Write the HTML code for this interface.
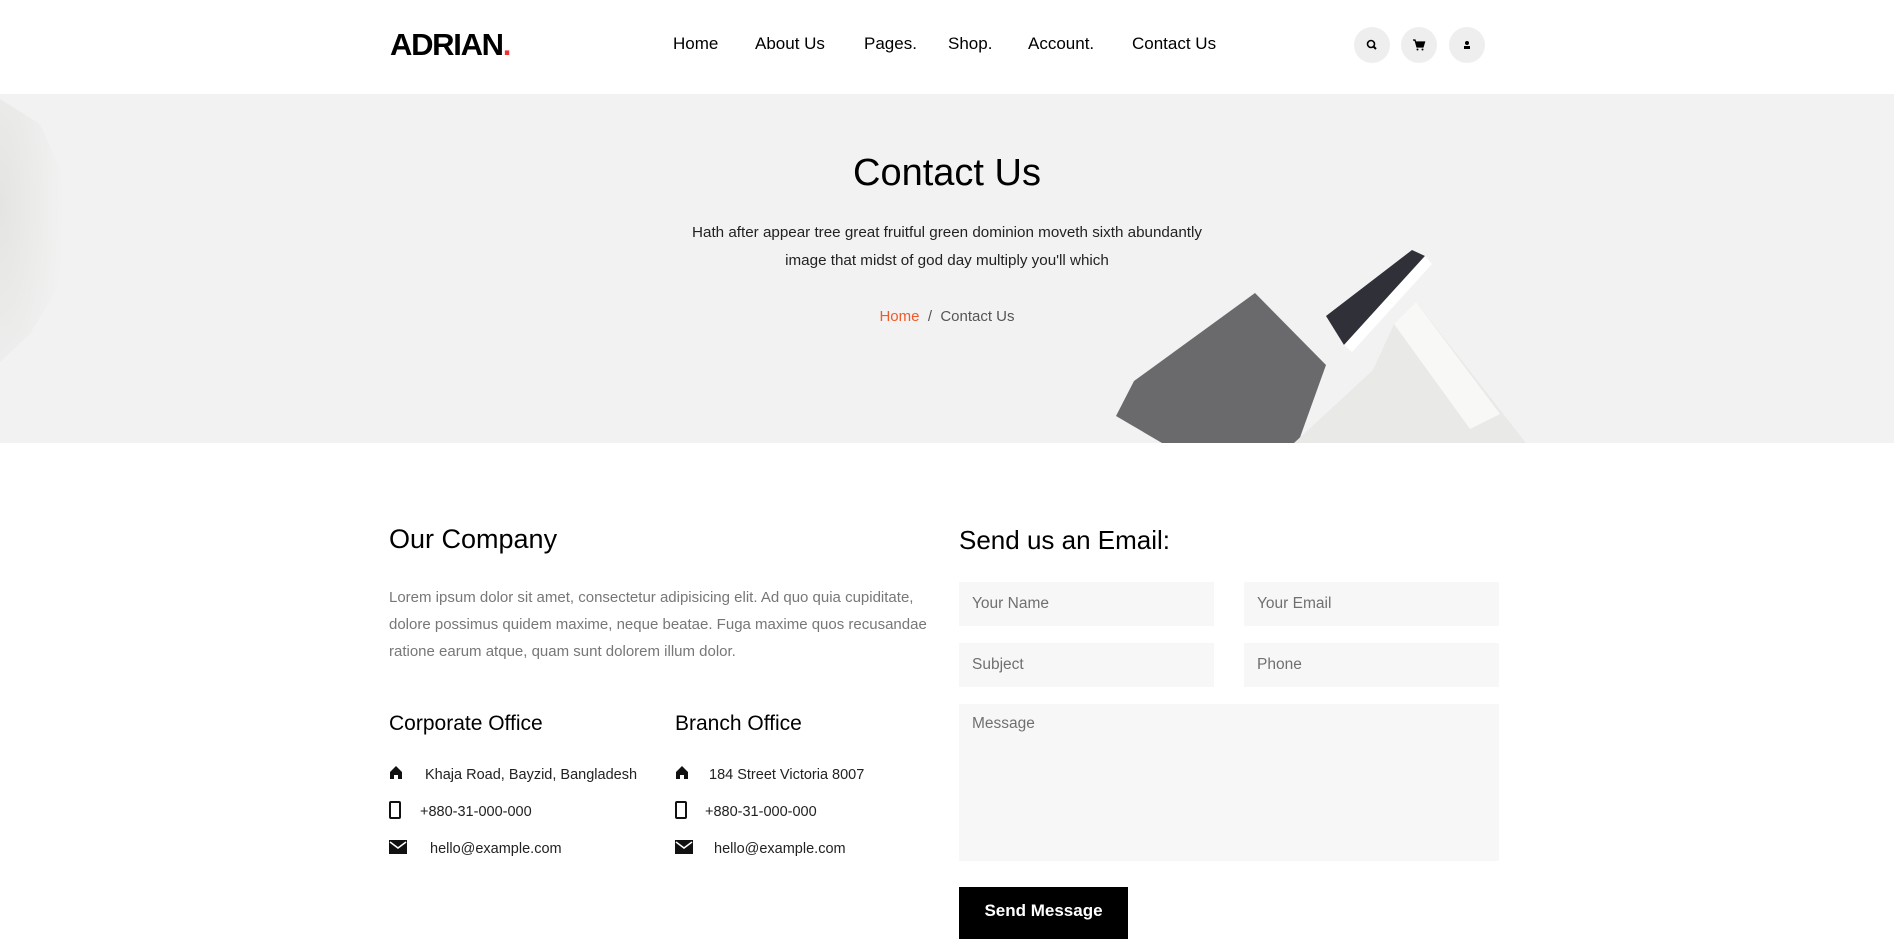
<!DOCTYPE html>
<html><head><meta charset="utf-8"><style>
*{margin:0;padding:0;box-sizing:border-box}
body{width:1894px;height:926px;overflow:hidden;background:#fff;font-family:"Liberation Sans",sans-serif;color:#000;position:relative}
.a{position:absolute;white-space:nowrap}
.nav{font-size:17px;top:34px}
.ic{position:absolute;top:27px;width:36px;height:36px;border-radius:50%;background:#eee}
.hero{position:absolute;top:94px;left:0;width:1894px;height:349px;background:#f2f2f2;overflow:hidden}
.inp{position:absolute;background:#f7f7f7;height:44px;color:#707070;font-size:15.5px;padding:13px 13px}
.ci{font-size:14.5px;color:#222}
</style></head><body>
<div class="a" style="left:390px;top:27px;font-size:31px;font-weight:bold;letter-spacing:-1.3px">ADRIAN<span style="color:#e33">.</span></div>
<div class="a nav" style="left:673px">Home</div>
<div class="a nav" style="left:755px">About Us</div>
<div class="a nav" style="left:864px">Pages.</div>
<div class="a nav" style="left:948px">Shop.</div>
<div class="a nav" style="left:1028px">Account.</div>
<div class="a nav" style="left:1132px">Contact Us</div>
<div class="ic" style="left:1354px"><svg width="36" height="36"><circle cx="17" cy="17" r="3.5" fill="none" stroke="#000" stroke-width="1.6"/><line x1="19.5" y1="19.5" x2="22" y2="22" stroke="#000" stroke-width="2"/></svg></div>
<div class="ic" style="left:1401px"><svg width="36" height="36"><path d="M12 13h2l2 7h6l1.5-5H15" fill="#000" stroke="#000" stroke-width="1.3"/><circle cx="16.5" cy="22.5" r="1" fill="#000"/><circle cx="21.5" cy="22.5" r="1" fill="#000"/></svg></div>
<div class="ic" style="left:1449px"><svg width="36" height="36"><circle cx="18" cy="16" r="2" fill="#000"/><rect x="15" y="19" width="6" height="3" fill="#000"/></svg></div>
<div class="hero">
<svg width="1894" height="349" style="position:absolute;left:0;top:0">
<defs><radialGradient id="g" cx="0" cy="0.4" r="0.9"><stop offset="0" stop-color="#e4e4e2"/><stop offset="1" stop-color="#f2f2f2"/></radialGradient></defs>
<path d="M0 5 L40 30 L72 100 L60 190 L30 240 L0 268 Z" fill="url(#g)"/>
<path d="M1255 199 L1326 271 L1298 349 L1162 349 L1116 322 L1134 287 Z" fill="#6a6a6c"/>
<path d="M1326 222 L1412 156 L1425 162 L1344 251 Z" fill="#2f3038"/>
<path d="M1344 251 L1425 162 L1432 170 L1352 258 Z" fill="#fff"/>
<path d="M1394 230 L1416 208 L1526 349 L1294 349 L1373 276 Z" fill="#e9e9e7"/>
<path d="M1394 230 L1416 208 L1500 320 L1470 335 Z" fill="#f8f8f6"/>
</svg>
<div class="a" style="left:0;width:1894px;text-align:center;top:58px;font-size:38px">Contact Us</div>
<div class="a" style="left:0;width:1894px;text-align:center;top:125px;font-size:15.2px;line-height:28px;color:#222">Hath after appear tree great fruitful green dominion moveth sixth abundantly<br>image that midst of god day multiply you'll which</div>
<div class="a" style="left:0;width:1894px;text-align:center;top:214px;font-size:15px;color:#555"><span style="color:#f05a28">Home</span> &nbsp;/&nbsp; Contact Us</div>
</div>
<div class="a" style="left:389px;top:524px;font-size:27px">Our Company</div>
<div class="a" style="left:389px;top:584px;font-size:15px;line-height:27px;color:#777">Lorem ipsum dolor sit amet, consectetur adipisicing elit. Ad quo quia cupiditate,<br>dolore possimus quidem maxime, neque beatae. Fuga maxime quos recusandae<br>ratione earum atque, quam sunt dolorem illum dolor.</div>
<div class="a" style="left:389px;top:712px;font-size:21px">Corporate Office</div>
<div class="a" style="left:675px;top:712px;font-size:21px">Branch Office</div>
<svg class="a" style="left:389px;top:765px" width="16" height="14"><path d="M1 7 L7 1 L13 7 V14 H9 V10 H5 V14 H1 Z" fill="#111"/></svg>
<svg class="a" style="left:675px;top:765px" width="16" height="14"><path d="M1 7 L7 1 L13 7 V14 H9 V10 H5 V14 H1 Z" fill="#111"/></svg>
<svg class="a" style="left:389px;top:801px" width="12" height="18"><rect x="1" y="1" width="10" height="16" rx="1" fill="none" stroke="#111" stroke-width="2"/></svg>
<svg class="a" style="left:675px;top:801px" width="12" height="18"><rect x="1" y="1" width="10" height="16" rx="1" fill="none" stroke="#111" stroke-width="2"/></svg>
<svg class="a" style="left:389px;top:840px" width="18" height="14"><rect width="18" height="14" fill="#111"/><path d="M1 2 L9 8 L17 2" fill="none" stroke="#fff" stroke-width="1.5"/></svg>
<svg class="a" style="left:675px;top:840px" width="18" height="14"><rect width="18" height="14" fill="#111"/><path d="M1 2 L9 8 L17 2" fill="none" stroke="#fff" stroke-width="1.5"/></svg>
<div class="a ci" style="left:425px;top:767px">Khaja Road, Bayzid, Bangladesh</div>
<div class="a ci" style="left:420px;top:804px">+880-31-000-000</div>
<div class="a ci" style="left:430px;top:841px">hello@example.com</div>
<div class="a ci" style="left:709px;top:767px">184 Street Victoria 8007</div>
<div class="a ci" style="left:705px;top:804px">+880-31-000-000</div>
<div class="a ci" style="left:714px;top:841px">hello@example.com</div>
<div class="a" style="left:959px;top:525px;font-size:26px">Send us an Email:</div>
<div class="inp" style="left:959px;top:582px;width:255px">Your Name</div>
<div class="inp" style="left:1244px;top:582px;width:255px">Your Email</div>
<div class="inp" style="left:959px;top:643px;width:255px">Subject</div>
<div class="inp" style="left:1244px;top:643px;width:255px">Phone</div>
<div class="inp" style="left:959px;top:704px;width:540px;height:157px;padding-top:11px">Message</div>
<div class="a" style="left:959px;top:887px;width:169px;height:52px;background:#000;color:#fff;font-size:17px;font-weight:bold;text-align:center;padding-top:14px">Send Message</div>
</body></html>
